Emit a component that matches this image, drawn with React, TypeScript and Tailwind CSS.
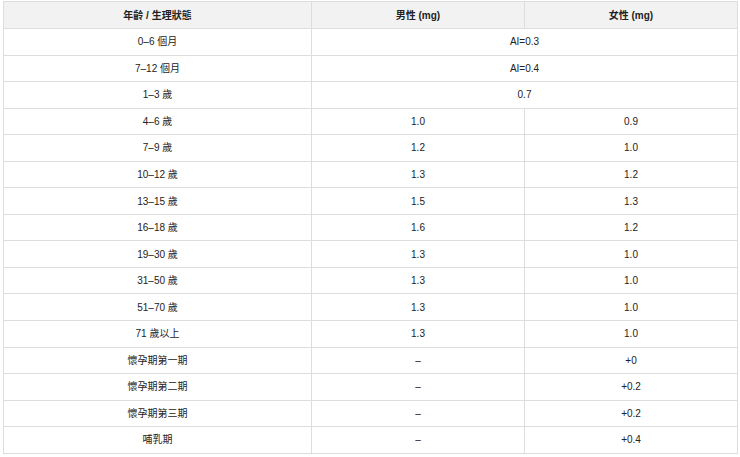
import React from "react";

type Row = { age: string; m: string; f?: string; span?: boolean };

const rows: Row[] = [
  { age: "0–6 個月", m: "AI=0.3", span: true },
  { age: "7–12 個月", m: "AI=0.4", span: true },
  { age: "1–3 歲", m: "0.7", span: true },
  { age: "4–6 歲", m: "1.0", f: "0.9" },
  { age: "7–9 歲", m: "1.2", f: "1.0" },
  { age: "10–12 歲", m: "1.3", f: "1.2" },
  { age: "13–15 歲", m: "1.5", f: "1.3" },
  { age: "16–18 歲", m: "1.6", f: "1.2" },
  { age: "19–30 歲", m: "1.3", f: "1.0" },
  { age: "31–50 歲", m: "1.3", f: "1.0" },
  { age: "51–70 歲", m: "1.3", f: "1.0" },
  { age: "71 歲以上", m: "1.3", f: "1.0" },
  { age: "懷孕期第一期", m: "–", f: "+0" },
  { age: "懷孕期第二期", m: "–", f: "+0.2" },
  { age: "懷孕期第三期", m: "–", f: "+0.2" },
  { age: "哺乳期", m: "–", f: "+0.4" },
];

export default function App() {
  return (
    <div
      className="w-[740px] h-[457px] bg-white pl-[3px] pt-[1px] text-[10px] text-[#222]"
      style={{ fontFamily: '"Liberation Sans", Arial, "Noto Sans CJK TC", sans-serif' }}
    >
      <table className="w-[734px] border-collapse table-fixed">
        <colgroup>
          <col className="w-[308px]" />
          <col className="w-[213px]" />
          <col className="w-[213px]" />
        </colgroup>
        <thead>
          <tr className="h-[27px] bg-[#f2f2f2]">
            <th className="border border-[#dddddd] font-bold p-0 text-center">年齡 / 生理狀態</th>
            <th className="border border-[#dddddd] font-bold p-0 text-center">男性 (mg)</th>
            <th className="border border-[#dddddd] font-bold p-0 text-center">女性 (mg)</th>
          </tr>
        </thead>
        <tbody>
          {rows.map((r) => (
            <tr key={r.age} className="h-[26.56px]">
              <td className="border border-[#dddddd] p-0 text-center">{r.age}</td>
              {r.span ? (
                <td colSpan={2} className="border border-[#dddddd] p-0 text-center">
                  {r.m}
                </td>
              ) : (
                <>
                  <td className="border border-[#dddddd] p-0 text-center">{r.m}</td>
                  <td className="border border-[#dddddd] p-0 text-center">{r.f}</td>
                </>
              )}
            </tr>
          ))}
        </tbody>
      </table>
    </div>
  );
}
